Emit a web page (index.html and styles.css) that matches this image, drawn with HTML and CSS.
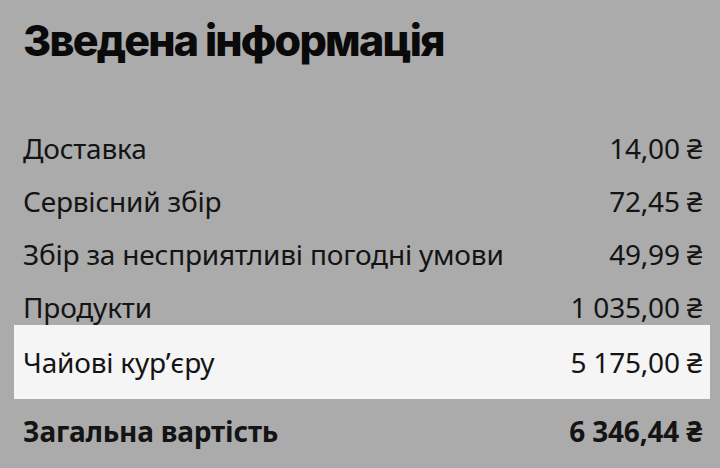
FILE: index.html
```html
<!DOCTYPE html>
<html lang="uk">
<head>
<meta charset="utf-8">
<link rel="stylesheet" href="styles.css">
</head>
<body>
<main class="summary">
  <h1 class="title">Зведена інформація</h1>
  <ul class="rows">
    <li class="row"><span>Доставка</span><span>14,00 ₴</span></li>
    <li class="row"><span>Сервісний збір</span><span>72,45 ₴</span></li>
    <li class="row"><span>Збір за несприятливі погодні умови</span><span>49,99 ₴</span></li>
    <li class="row"><span>Продукти</span><span>1 035,00 ₴</span></li>
    <li class="row row-hl"><span>Чайові кур’єру</span><span>5 175,00 ₴</span></li>
    <li class="row row-total"><span>Загальна вартість</span><span>6 346,44 ₴</span></li>
  </ul>
</main>
</body>
</html>
```

FILE: styles.css
```css
html, body {
  margin: 0;
  padding: 0;
  background: #ababab;
  width: 720px;
  height: 468px;
  overflow: hidden;
}
.summary {
  padding: 0 10px 0 14px;
  font-family: "Noto Sans", "Open Sans", sans-serif;
  color: #141414;
}
.title {
  margin: 0;
  padding: 12px 0 0 9px;
  font-family: Inter, "Noto Sans", sans-serif;
  font-weight: 800;
  font-size: 43px;
  line-height: 56px;
  color: #0a0a0a;
  letter-spacing: -1.8px;
}
.rows {
  list-style: none;
  margin: 53px 0 0;
  padding: 0;
}
.row {
  display: flex;
  justify-content: space-between;
  align-items: center;
  height: 53px;
  padding: 0 8px 0 9px;
  font-size: 28px;
  letter-spacing: -0.2px;
}
.row-hl {
  background: #f5f5f5;
  height: 74px;
  margin-top: -8px;
}
.row-total {
  font-weight: 700;
  height: 64px;
}
```
